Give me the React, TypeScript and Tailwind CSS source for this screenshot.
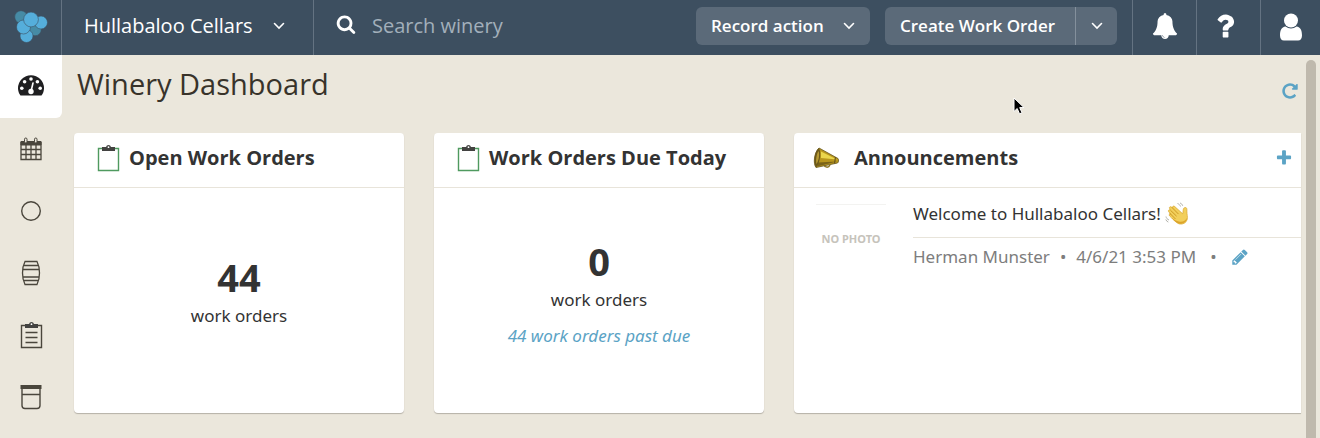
import React, { useState } from 'react'

const paths = {
  search: 'M1216 832q0-185-131.5-316.5t-316.5-131.5-316.5 131.5-131.5 316.5 131.5 316.5 316.5 131.5 316.5-131.5 131.5-316.5zm512 832q0 52-38 90t-90 38q-54 0-90-38l-343-342q-179 124-399 124-143 0-273.5-55.5t-225-150-150-225-55.5-273.5 55.5-273.5 150-225 225-150 273.5-55.5 273.5 55.5 225 150 150 225 55.5 273.5q0 220-124 399l343 343q37 37 37 90z',
  bell: 'M912 1696q0-16-16-16-59 0-101.5-42.5t-42.5-101.5q0-16-16-16t-16 16q0 73 51.5 124.5t124.5 51.5q16 0 16-16zm816-288q0 52-38 90t-90 38h-448q0 106-75 181t-181 75-181-75-75-181h-448q-52 0-90-38t-38-90q50-42 91-88t85-119.5 74.5-158.5 50-206 19.5-260q0-152 117-282.5t307-158.5q-8-19-8-39 0-40 28-68t68-28 68 28 28 68q0 20-8 39 190 28 307 158.5t117 282.5q0 139 19.5 260t50 206 74.5 158.5 85 119.5 91 88z',
  question: 'M1088 1256v240q0 16-12 28t-28 12h-240q-16 0-28-12t-12-28v-240q0-16 12-28t28-12h240q16 0 28 12t12 28zm316-600q0 54-15.5 101t-35 76.5-55 59.5-57.5 43.5-61 35.5q-41 23-68.5 65t-27.5 67q0 17-12 32.5t-28 15.5h-240q-15 0-25.5-18.5t-10.5-37.5v-45q0-83 65-156.5t143-108.5q59-27 84-56t25-76q0-42-46.5-74t-107.5-32q-65 0-108 29-35 25-107 115-13 16-31 16-12 0-25-8l-164-125q-13-10-15.5-25t5.5-28q160-266 464-266 80 0 161 31t146 83 106 127.5 41 158.5z',
  plus: 'M1600 736v192q0 40-28 68t-68 28h-416v416q0 40-28 68t-68 28h-192q-40 0-68-28t-28-68v-416h-416q-40 0-68-28t-28-68v-192q0-40 28-68t68-28h416v-416q0-40 28-68t68-28h192q40 0 68 28t28 68v416h416q40 0 68 28t28 68z',
  pencil: 'M491 1536l91-91-235-235-91 91v107h128v128h107zm523-928q0-22-22-22-10 0-17 7l-542 542q-7 7-7 17 0 22 22 22 10 0 17-7l542-542q7-7 7-17zm-54-192l416 416-832 832h-416v-416zm683 96q0 53-37 90l-166 166-416-416 166-165q36-38 90-38 53 0 91 38l235 234q37 39 37 91z',
  repeat: 'M1664 256v448q0 26-19 45t-45 19h-448q-42 0-59-40-17-39 14-69l138-138q-148-137-349-137-104 0-198.5 40.5t-163.5 109.5-109.5 163.5-40.5 198.5 40.5 198.5 109.5 163.5 163.5 109.5 198.5 40.5q119 0 225-52t179-147q7-10 23-12 15 0 25 9l137 138q9 8 9.5 20.5t-7.5 22.5q-109 132-264 204.5t-327 72.5q-156 0-298-61t-245-164-164-245-61-298 61-298 164-245 245-164 298-61q147 0 284.5 55.5t244.5 156.5l130-129q29-31 70-14 39 17 39 59z',
}

const Icon = ({ name, className }: { name: keyof typeof paths; className: string }) => (
  <svg viewBox="0 0 1792 1792" fill="currentColor" className={className} aria-hidden="true">
    <path d={paths[name]} />
  </svg>
)

const Chevron = () => (
  <svg viewBox="0 0 12 8" fill="none" stroke="currentColor" strokeWidth="1.6" className="w-3 h-2 shrink-0" aria-hidden="true">
    <path d="M1.5 1.5 6 6l4.500-4.500" strokeLinecap="round" />
  </svg>
)

const Logo = () => (
  <svg viewBox="0 0 34 34" className="w-[34px] h-[34px]" stroke="#3d4f60" strokeWidth="0.6" aria-hidden="true">
    <circle cx="7" cy="8" r="6.300" fill="#468ba5" />
    <circle cx="21" cy="20.500" r="6.300" fill="#468ba5" />
    <circle cx="27" cy="13.500" r="6.500" fill="#55aedb" />
    <circle cx="12.500" cy="27" r="6.500" fill="#55aedb" />
    <circle cx="9.500" cy="18" r="7" fill="#55aedb" />
    <circle cx="17" cy="10.500" r="7.400" fill="#55aedb" />
  </svg>
)

const GaugeIcon = () => (
  <svg viewBox="0 0 28 24" className="w-7 h-6" aria-hidden="true">
    <path d="M3.500 22.500C2 20.500 1 18 1 15.200a13 13 0 0 1 26 0c0 2.800-1 5.300-2.500 7.300Z" fill="#1f1f21" />
    <g fill="#fff">
      <circle cx="4.800" cy="15.200" r="1.800" />
      <circle cx="7.600" cy="8.800" r="1.800" />
      <circle cx="14" cy="6" r="1.800" />
      <circle cx="20.400" cy="8.800" r="1.800" />
      <circle cx="23.200" cy="15.200" r="1.800" />
      <circle cx="14" cy="18.500" r="2.700" />
    </g>
    <path d="m14 18.500 2-8.500" stroke="#fff" strokeWidth="1.600" strokeLinecap="round" />
  </svg>
)

const CalendarIcon = () => (
  <svg viewBox="0 0 22 24" className="w-[22px] h-6" fill="none" stroke="#4a463c" aria-hidden="true">
    <path d="M1 4.500h20V8H1z" fill="#4a463c" />
    <path d="M1 5.500h20v17H1zM1 12.500h20M1 17.500h20M6 8v14M11 8v14M16 8v14" strokeWidth="1.300" />
    <rect x="4.500" y="1" width="2.500" height="5" rx="1.250" fill="#ebe7dc" />
    <rect x="14.500" y="1" width="2.500" height="5" rx="1.250" fill="#ebe7dc" />
  </svg>
)

const CircleIcon = () => (
  <svg viewBox="0 0 22 22" className="w-[22px] h-[22px]" aria-hidden="true">
    <circle cx="11" cy="11" r="9.300" fill="none" stroke="#4a463c" strokeWidth="1.400" />
  </svg>
)

const BarrelIcon = () => (
  <svg viewBox="0 0 20 26" className="w-5 h-[26px]" fill="none" stroke="#4a463c" strokeWidth="1.300" aria-hidden="true">
    <path d="M4 1.500h12c1.600 3 2.500 7 2.500 11.500s-.900 8.500-2.500 11.500H4C2.400 21.500 1.500 17.500 1.500 13S2.400 4.500 4 1.500ZM2.700 5.500h14.600M1.700 9.500h16.600M1.700 17h16.600M2.700 20.500h14.600" />
  </svg>
)

const ClipboardIcon = ({ lines, color }: { lines?: boolean; color: string }) => (
  <svg viewBox="0 0 24 30" className="w-6 h-[30px] shrink-0" fill="none" aria-hidden="true">
    <path d="M2.500 5.500h20v22h-20z" stroke={color} strokeWidth="1.400" />
    <path d="M6 4h4a2.600 2.600 0 0 1 5 0h4v4H6z" fill="#434341" />
    <circle cx="12.500" cy="4.200" r=".9" fill="#fff" />
    {lines && <path d="M6.500 12.500h12M6.500 17.500h12M6.500 22.500h12" stroke={color} strokeWidth="1.400" />}
  </svg>
)

const TankIcon = () => (
  <svg viewBox="0 0 22 26" className="w-[22px] h-[26px]" fill="none" stroke="#4a463c" strokeWidth="1.400" aria-hidden="true">
    <path d="M.5 1h21v4H.5z" fill="#4a463c" stroke="none" />
    <path d="M2 4v17.500a3 3 0 0 0 3 3h12a3 3 0 0 0 3-3V4M2 10.500h18" />
  </svg>
)

const MegaphoneIcon = () => (
  <svg viewBox="0 0 28 24" className="w-7 h-6 shrink-0" aria-hidden="true">
    <path d="M12 18.500c.500 3 4.500 3.800 6 .500" fill="none" stroke="#8d7624" strokeWidth="1.500" />
    <path d="M7 2 26 12.500c1 1 .5 4-.5 4.500L4 21.500C1 18 2 6.500 7 2Z" fill="#b8961d" stroke="#66561d" strokeWidth=".8" />
    <path d="M9 5.500 25 13.500l-16-1.500Z" fill="#ead54c" />
    <path d="M6 16.500 25 15.500 5 20.500Z" fill="#7a6318" />
    <path d="M7 2C2.500 5 1 16 4 21.500 7 19 10 8 7 2Z" fill="#6b581b" />
    <path d="M6.500 5C4.500 8 3.500 14 4.500 18 6.500 15 8 9 6.500 5Z" fill="#b89b34" />
    <path d="m23.500 11-1 6.500" stroke="#66561d" strokeWidth="1.200" />
  </svg>
)

const WaveIcon = () => (
  <svg viewBox="0 0 24 24" className="w-6 h-6 shrink-0" role="img" aria-label="waving hand">
    <path d="M20.500 5.500c1.300.200 1.500 1.500 1.400 3.500-.100 3.500 1 6 .300 8.500-1 3.500-4.500 5-7.500 4.500-2.500-.500-5-3-10.200-8.200-1-1 .300-2.500 1.400-1.600L3.700 9.800c-1-1.200.500-2.700 1.700-1.600L4.600 6.500C3.800 5.200 5.500 4 6.600 5l1 1c-.600-1.500 1-2.600 2.100-1.500l8 7.300c.800-2-.400-6.400 2.800-6.300Z" fill="#f2cf5b" stroke="#d8a62c" strokeWidth=".7" />
    <path d="m5.600 8.400 6 5.800M7 5.500l6.500 6.600M4.500 11l6 6" stroke="#c8931d" strokeWidth=".9" />
    <path d="M6 15.500c4 4.500 7 7 11 6 3-.800 4.800-2.800 5-5.500-2 3-4 4-7 3.800-3-.300-5-1.800-9-4.300Z" fill="#dca42b" />
    <path d="M12.500 1.500c1.500.500 2.500 1.500 3 3M15 1c1.500.500 2.300 1.500 2.700 2.800M1 14.500c.300 1.700 1.300 2.800 3 3.500M.8 17.500c.500 1.300 1.200 2 2.500 2.600" fill="none" stroke="#a9a9a2" strokeWidth=".9" />
  </svg>
)

const navItems = [
  { label: 'Calendar', icon: <CalendarIcon /> },
  { label: 'Lots', icon: <CircleIcon /> },
  { label: 'Barrels', icon: <BarrelIcon /> },
  { label: 'Work orders', icon: <ClipboardIcon lines color="#4a463c" /> },
  { label: 'Tanks', icon: <TankIcon /> },
]

const Card = ({ title, icon, action, className = '', children }: any) => (
  <section className={`bg-white flex flex-col min-h-[280px] min-w-0 shadow-[0_1px_1px_#b5b1a7] ${className}`}>
    <div className="h-[55px] shrink-0 flex items-center border-b border-[#e8e4da] pl-[22px] pr-2 pb-1">
      {icon}
      <h2 className="flex-1 text-[20px] leading-6 font-bold text-[#333] whitespace-nowrap">{title}</h2>
      {action}
    </div>
    {children}
  </section>
)

const App = () => {
  const [query, setQuery] = useState('')

  return (
    <div className="min-h-screen flex flex-col bg-[#ebe7dc] font-['Open_Sans','Noto_Sans',sans-serif] text-[#333]">
      <header className="h-[55px] shrink-0 flex bg-[#3d4f60] text-white">
        <a href="#" aria-label="Home" className="w-[62px] shrink-0 flex items-center justify-center pb-1 border-r border-[#647382]">
          <Logo />
        </a>
        <button className="w-[252px] shrink-0 flex items-center gap-5 pl-[22px] pb-1 border-r border-[#647382] text-[20px] leading-6 whitespace-nowrap">
          Hullabaloo Cellars
          <Chevron />
        </button>
        <label className="flex-1 min-w-0 flex items-center gap-4 pl-[22px] pb-1">
          <Icon name="search" className="w-5 h-5 shrink-0 mb-1" />
          <input
            type="text"
            aria-label="Search winery"
            placeholder="Search winery"
            value={query}
            onChange={(e) => setQuery(e.target.value)}
            className="flex-1 min-w-0 bg-transparent text-[20px] leading-6 outline-none placeholder:text-[#a3afbb]"
          />
        </label>
        <div className="flex shrink-0 gap-[15px] pt-[7px] pr-[15px] text-[17px] leading-6 font-semibold whitespace-nowrap">
          <button className="w-[174px] h-[38px] flex items-center justify-between px-[15px] rounded-md bg-[#5b6a79]">
            Record action
            <Chevron />
          </button>
          <div className="flex h-[38px] rounded-md bg-[#5b6a79]">
            <button className="w-[190px] pl-[15px] text-left">Create Work Order</button>
            <button aria-label="More work order options" className="w-[42px] flex items-center justify-center border-l border-[#84909c]">
              <Chevron />
            </button>
          </div>
        </div>
        <button aria-label="Notifications" className="w-16 shrink-0 flex items-center justify-center pb-1 border-l border-[#647382]">
          <Icon name="bell" className="w-[26px] h-[26px]" />
        </button>
        <button aria-label="Help" className="w-16 shrink-0 flex items-center justify-center pr-2 pb-1 border-l border-[#647382]">
          <Icon name="question" className="w-8 h-8" />
        </button>
        <button aria-label="Account" className="w-[60px] shrink-0 flex items-center justify-center border-l border-[#647382]">
          <svg viewBox="0 0 24 30" fill="currentColor" className="w-6 h-[30px]" aria-hidden="true">
            <circle cx="12" cy="7.500" r="7" />
            <path d="M6.500 13.500a8.500 8.500 0 0 0 11 0c4 .5 5.500 4 5.500 9 0 3-1.500 5-4 5H5c-2.500 0-4-2-4-5 0-5 1.500-8.500 5.500-9Z" />
          </svg>
        </button>
      </header>

      <div className="flex-1 flex">
        <nav className="w-[62px] shrink-0 flex flex-col">
          <a href="#" aria-label="Dashboard" className="h-[63px] flex items-center justify-center pb-1 bg-white rounded-br-md">
            <GaugeIcon />
          </a>
          {navItems.map((item) => (
            <a key={item.label} href="#" aria-label={item.label} className="h-[62px] flex items-center justify-center">
              {item.icon}
            </a>
          ))}
        </nav>

        <main className="flex-1 min-w-0 pl-3">
          <div className="h-[78px] flex justify-between pl-[3px] pr-[2px]">
            <h1 className="pt-[11px] text-[29px] leading-9 text-[#38332a]">Winery Dashboard</h1>
            <button aria-label="Refresh" className="h-[72px] text-[#5ba3c5]">
              <Icon name="repeat" className="w-[18px] h-[18px]" />
            </button>
          </div>

          <div className="grid grid-cols-[330px_330px_minmax(0,1fr)] gap-[30px]">
            <Card title="Open Work Orders" className="rounded" icon={<div className="mr-[9px]"><ClipboardIcon color="#4f9a5f" /></div>}>
              <div className="flex-1 flex flex-col items-center justify-center pb-6">
                <p className="text-[38px] leading-[54px] font-bold">44</p>
                <p className="text-[17px] leading-6 font-['Noto_Sans',sans-serif]">work orders</p>
              </div>
            </Card>

            <Card title="Work Orders Due Today" className="rounded" icon={<div className="mr-[9px]"><ClipboardIcon color="#4f9a5f" /></div>}>
              <div className="flex-1 flex flex-col items-center justify-center pb-5">
                <p className="text-[38px] leading-[54px] font-bold">0</p>
                <p className="text-[17px] leading-6 font-['Noto_Sans',sans-serif]">work orders</p>
                <a href="#" className="pt-3 text-[17px] leading-6 italic text-[#5ba3c5] font-['Noto_Sans',sans-serif]">44 work orders past due</a>
              </div>
            </Card>

            <Card
              title="Announcements"
              className="rounded-l"
              icon={<div className="-ml-1 mr-[14px]"><MegaphoneIcon /></div>}
              action={
                <button aria-label="Add announcement" className="text-[#5ba3c5]">
                  <Icon name="plus" className="w-[18px] h-[18px]" />
                </button>
              }
            >
              <div className="flex pt-3 font-['Noto_Sans',sans-serif]">
                <div className="w-[119px] shrink-0 pt-1 pl-[22px] pr-[27px]">
                  <div className="h-[70px] flex items-center justify-center border-t border-[#f3f3f1] text-[11px] font-bold text-[#c6c3bb] whitespace-nowrap">
                    NO PHOTO
                  </div>
                </div>
                <div className="flex-1 min-w-0">
                  <p className="h-[38px] flex gap-1 border-b border-[#e8e4da] pt-[2px] text-[17px] leading-6">
                    Welcome to Hullabaloo Cellars!
                    <WaveIcon />
                  </p>
                  <div className="flex items-center pt-[7px] text-[17px] leading-6 text-[#7d7d7d] whitespace-nowrap">
                    <span>Herman Munster</span>
                    <span className="px-[10px]">•</span>
                    <span>4/6/21 3:53 PM</span>
                    <span className="px-[14px]">•</span>
                    <button aria-label="Edit announcement" className="text-[#5ba3c5]">
                      <Icon name="pencil" className="w-[18px] h-[18px]" />
                    </button>
                  </div>
                </div>
              </div>
            </Card>
          </div>
        </main>

        <div className="w-[19px] shrink-0 flex justify-center pt-[5px]">
          <div className="w-[10px] rounded-t-full bg-[#bfb9ad]"></div>
        </div>
      </div>

      {/* mouse pointer */}
      <svg viewBox="0 0 12 18" className="absolute left-[1013px] top-[97px] w-3 h-[18px]" aria-hidden="true">
        <path d="M1 1v13.500l3.200-3 2.300 5.300 2.500-1-2.300-5.200H11Z" fill="#000" stroke="#fff" strokeWidth="1" />
      </svg>
    </div>
  )
}

export default App
